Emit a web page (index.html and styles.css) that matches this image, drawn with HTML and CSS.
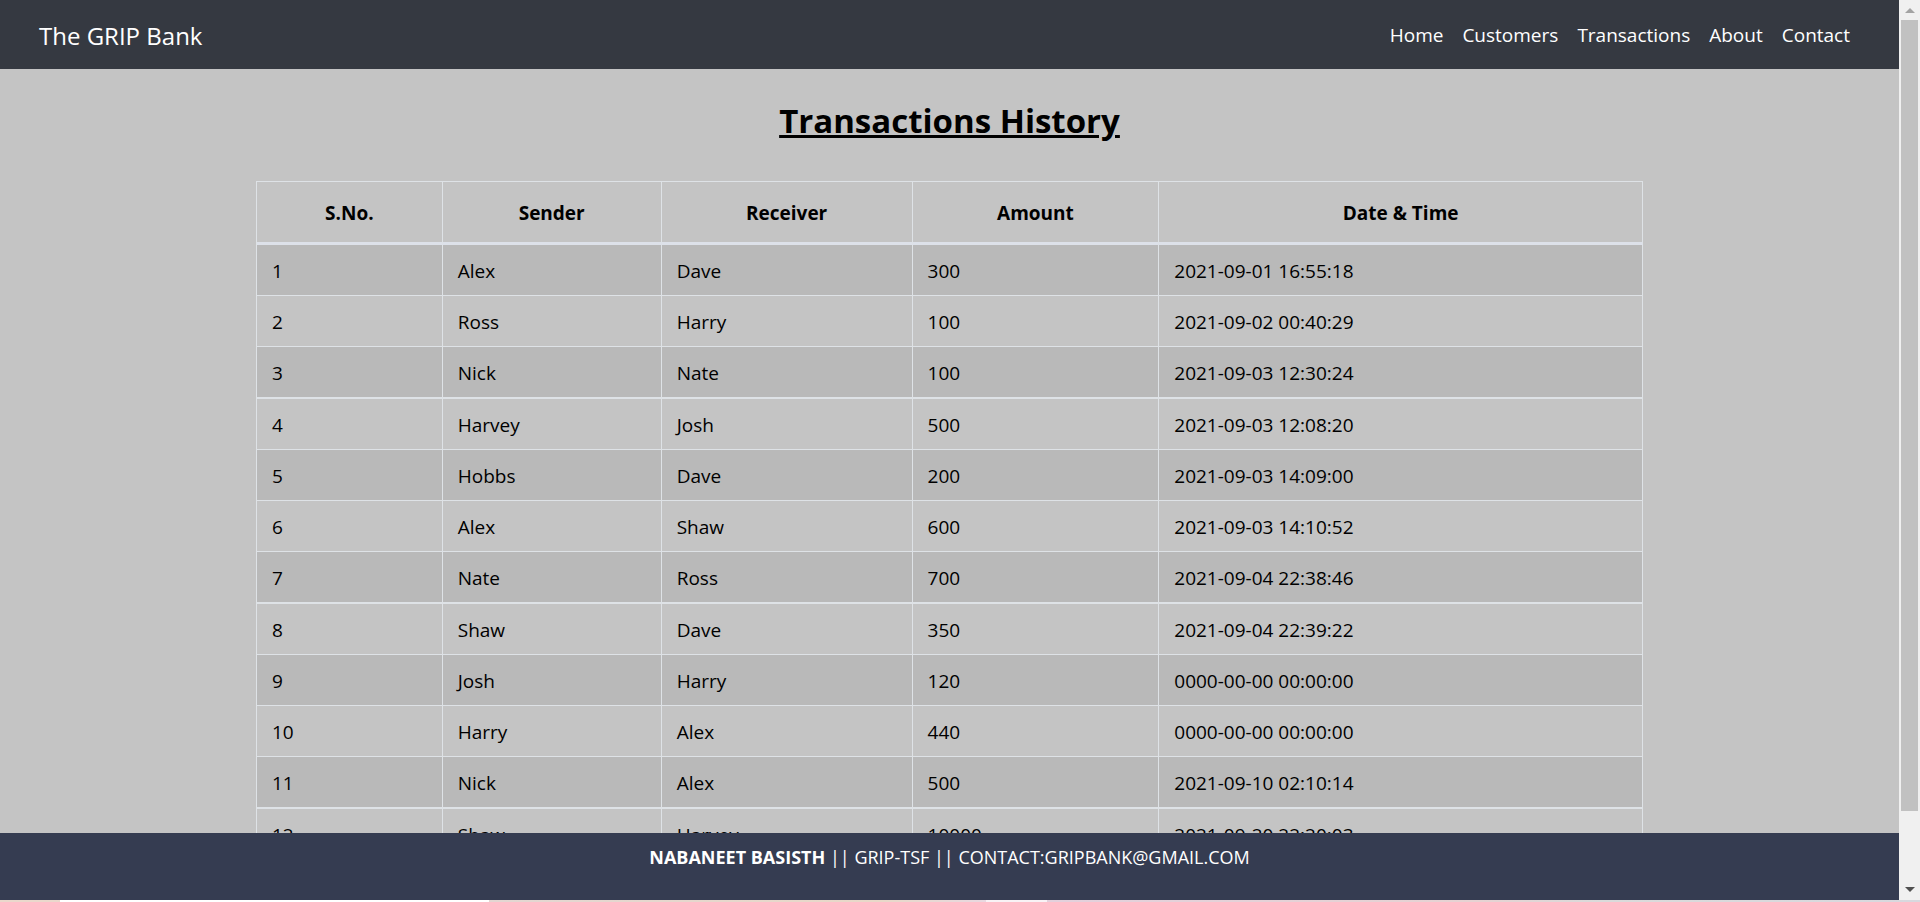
FILE: index.html
```html
<!DOCTYPE html>
<html lang="en">
<head>
<meta charset="utf-8">
<title>Transactions History</title>
<link rel="stylesheet" href="styles.css">
</head>
<body>
<div class="window">
  <div class="page">
    <header class="navbar">
      <a class="brand" href="#">The GRIP Bank</a>
      <nav class="nav-links">
        <a href="#">Home</a>
        <a href="#">Customers</a>
        <a href="#">Transactions</a>
        <a href="#">About</a>
        <a href="#">Contact</a>
      </nav>
    </header>
    <main class="content">
      <h2 class="title">Transactions History</h2>
      <table class="history">
        <colgroup><col class="c-no"><col class="c-sender"><col class="c-receiver"><col class="c-amount"><col class="c-date"></colgroup>
        <thead>
          <tr><th>S.No.</th><th>Sender</th><th>Receiver</th><th>Amount</th><th>Date &amp; Time</th></tr>
        </thead>
        <tbody>
          <tr><td>1</td><td>Alex</td><td>Dave</td><td>300</td><td>2021-09-01 16:55:18</td></tr>
          <tr><td>2</td><td>Ross</td><td>Harry</td><td>100</td><td>2021-09-02 00:40:29</td></tr>
          <tr><td>3</td><td>Nick</td><td>Nate</td><td>100</td><td>2021-09-03 12:30:24</td></tr>
          <tr><td>4</td><td>Harvey</td><td>Josh</td><td>500</td><td>2021-09-03 12:08:20</td></tr>
          <tr><td>5</td><td>Hobbs</td><td>Dave</td><td>200</td><td>2021-09-03 14:09:00</td></tr>
          <tr><td>6</td><td>Alex</td><td>Shaw</td><td>600</td><td>2021-09-03 14:10:52</td></tr>
          <tr><td>7</td><td>Nate</td><td>Ross</td><td>700</td><td>2021-09-04 22:38:46</td></tr>
          <tr><td>8</td><td>Shaw</td><td>Dave</td><td>350</td><td>2021-09-04 22:39:22</td></tr>
          <tr><td>9</td><td>Josh</td><td>Harry</td><td>120</td><td>0000-00-00 00:00:00</td></tr>
          <tr><td>10</td><td>Harry</td><td>Alex</td><td>440</td><td>0000-00-00 00:00:00</td></tr>
          <tr><td>11</td><td>Nick</td><td>Alex</td><td>500</td><td>2021-09-10 02:10:14</td></tr>
          <tr><td>12</td><td>Shaw</td><td>Harvey</td><td>10000</td><td>2021-09-20 22:20:03</td></tr>
        </tbody>
      </table>
    </main>
    <footer class="footer"><p><b>NABANEET BASISTH</b> || GRIP-TSF || CONTACT:GRIPBANK@GMAIL.COM</p></footer>
  </div>
  <div class="scrollbar" aria-hidden="true">
    <svg class="arrow" width="10" height="5" viewBox="0 0 10 5"><path fill="#a3a3a3" d="M5 0L10 5H0z"/></svg>
    <div class="track"><div class="thumb"></div></div>
    <svg class="arrow" width="10" height="5" viewBox="0 0 10 5"><path fill="#505050" d="M0 0H10L5 5z"/></svg>
  </div>
</div>
<div class="edge"></div>
</body>
</html>
```
FILE: styles.css
```css
* { box-sizing: border-box; }

body {
  margin: 0;
  height: 100vh;
  display: flex;
  flex-direction: column;
  overflow: hidden;
  background: #c4c4c4;
  color: #000;
  font-family: "Segoe UI", "Open Sans", "Noto Sans", sans-serif;
  font-size: 19px;
  line-height: 30px;
}

a { color: #fff; text-decoration: none; }

.window { flex: 1; min-height: 0; display: flex; }

.page { flex: 1; min-width: 0; display: flex; flex-direction: column; }

.navbar {
  display: flex;
  align-items: center;
  justify-content: space-between;
  height: 69px;
  padding: 0 49px 0 39px;
  background: #353941;
}

.brand { font-size: 24px; padding-top: 2px; }

.nav-links { display: flex; gap: 19px; }

.content {
  flex: 1;
  min-height: 0;
  overflow: hidden;
  padding: 28px 256px 0;
}

.title {
  margin: 0 0 36px;
  font-size: 33px;
  font-weight: 700;
  line-height: 48px;
  text-align: center;
  text-decoration: underline;
  text-decoration-thickness: 3px;
}

.history {
  width: 100%;
  table-layout: fixed;
  border-collapse: separate;
  border-spacing: 0;
  border-top: 1px solid #dee2e6;
  border-left: 1px solid #dee2e6;
}

.c-no { width: 13.4%; }
.c-sender { width: 15.8%; }
.c-receiver { width: 18.1%; }
.c-amount { width: 17.8%; }
.c-date { width: 34.9%; }

.history th, .history td {
  border-right: 1px solid #dee2e6;
  border-bottom: 1px solid #dee2e6;
  padding: 11px 15px 9px;
}

.history th {
  padding: 16px 15px 14px;
  border-bottom: 3px solid #dde1e9;
  font-weight: 700;
}

.history tbody tr:nth-child(odd) { background: #b9b9b9; }

.history tbody tr:nth-child(4n + 3) td { border-bottom-width: 2px; }

.footer {
  height: 67px;
  background: #353c51;
  color: #fff;
  font-size: 18px;
  text-align: center;
}

.footer p { margin: 9px 0 0; }

.scrollbar {
  width: 21px;
  padding: 8px 2px;
  display: flex;
  flex-direction: column;
  align-items: center;
  background: #f0f0f0;
}

.track { flex: 1; width: 100%; padding: 7px 0; }

.thumb { height: 92%; background: #c1c1c1; }

.edge {
  height: 2px;
  background: linear-gradient(to right, #ead8cc 60px, #fff 60px 489px, #e3d6d2 489px, #e8d8c8 880px, #e8d8e0 986px, #f8f2f5 986px 1047px, #e3d0dc 1047px, #e6d2d2 1480px, #dadada 1600px, #d8d8de);
}
```
